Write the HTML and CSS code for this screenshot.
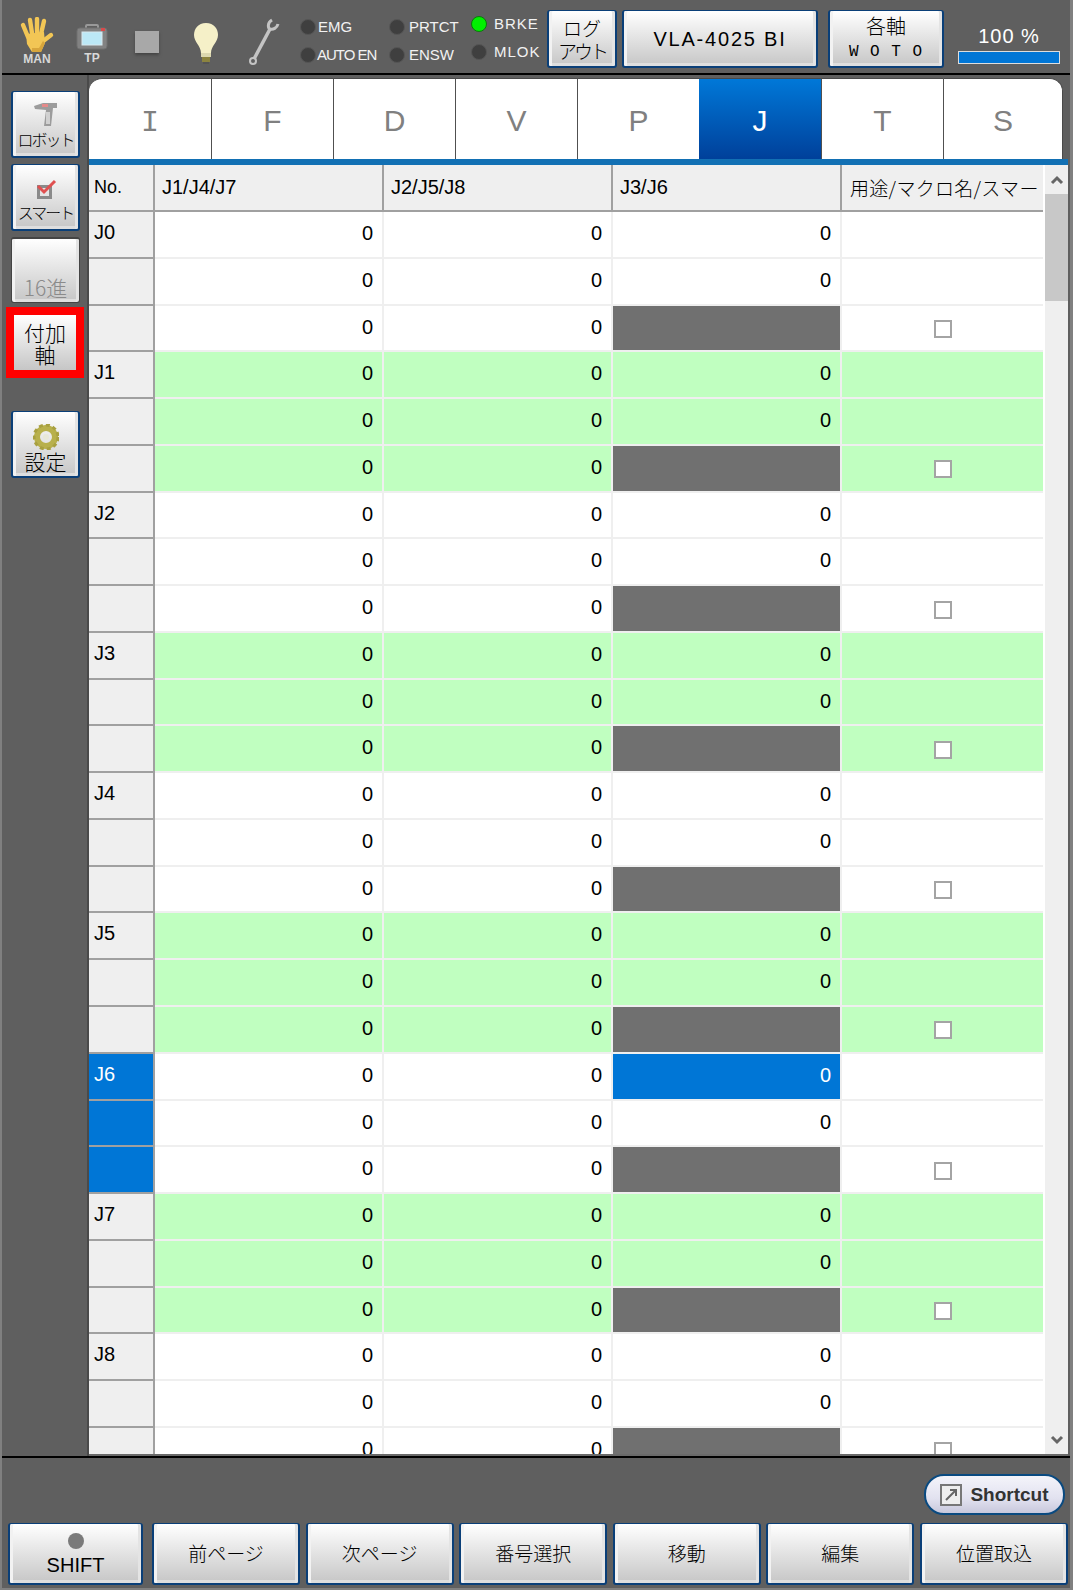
FILE: index.html
```html
<!DOCTYPE html>
<html lang="ja">
<head>
    <meta charset="UTF-8">
    <title>J</title>
    <link rel="stylesheet" href="styles.css">
</head>
<body>
<div class="screen">
    <!-- top status bar -->
    <header class="topbar">
        <div class="status-icons">
            <div class="icon-cell cell-hand">
                <svg width="36" height="36" viewBox="0 0 36 36"><g stroke="#f2c655" stroke-width="4.4" stroke-linecap="round" fill="none"><path d="M9 20 L4 8"/><path d="M13 16 L11 3"/><path d="M18 16 L18 2"/><path d="M22 17 L25 4"/><path d="M23 25 L32 18"/></g><path d="M7 17 L25 15 L26 26 L22 35 L13 35 L8 27 Z" fill="#f2c655"/><path d="M13 35 L22 35 L26 26 L24 24 L20 31 L13 31 Z" fill="#d8a63c"/></svg>
                <span class="icon-label">MAN</span>
            </div>
            <div class="icon-cell cell-tp">
                <svg width="32" height="28" viewBox="0 0 32 28"><rect x="10" y="1" width="12" height="5" rx="1" fill="none" stroke="#999" stroke-width="2"/><rect x="1" y="4" width="30" height="21" rx="3" fill="#828282" stroke="#707070"/><rect x="6" y="8" width="20" height="13" fill="#bce8f6" stroke="#d8e8ee"/><rect x="25" y="4" width="4" height="3" fill="#d84a4a"/></svg>
                <span class="icon-label">TP</span>
            </div>
            <div class="icon-cell cell-stop"><div class="stop-square"></div></div>
            <div class="icon-cell cell-bulb">
                <svg width="26" height="44" viewBox="0 0 26 44"><path d="M13 1 C5 1 1 7 1 13 C1 20 8 24 8 31 L18 31 C18 24 25 20 25 13 C25 7 21 1 13 1 Z" fill="#f5f0c8"/><rect x="8" y="31" width="10" height="4" fill="#dcd8b0"/><rect x="9" y="35" width="8" height="5" fill="#8c8440"/><rect x="10" y="40" width="6" height="2" fill="#555"/></svg>
            </div>
            <div class="icon-cell cell-wrench">
                <svg width="32" height="48" viewBox="0 0 32 48"><path d="M6 41 L22 11" fill="none" stroke="#c4c4c4" stroke-width="3.5"/><path d="M24 2 C19 5 20 10 22 11 C25 12 29 10 30 6" fill="none" stroke="#c4c4c4" stroke-width="3"/><circle cx="5" cy="43" r="3" fill="none" stroke="#c4c4c4" stroke-width="2"/></svg>
            </div>
        </div>
        <div class="lamps">
            <div class="lamp-col col-a">
                <div class="lamp"><i class="dot"></i><span>EMG</span></div>
                <div class="lamp lamp-tight"><i class="dot"></i><span>AUTO EN</span></div>
            </div>
            <div class="lamp-col col-b">
                <div class="lamp"><i class="dot"></i><span>PRTCT</span></div>
                <div class="lamp"><i class="dot"></i><span>ENSW</span></div>
            </div>
            <div class="lamp-col col-c">
                <div class="lamp"><i class="dot on"></i><span>BRKE</span></div>
                <div class="lamp"><i class="dot"></i><span>MLOK</span></div>
            </div>
        </div>
        <button class="btn btn-logout">ログ<br><span class="kana-tight">アウト</span></button>
        <button class="btn btn-model"><span class="model-name">VLA-4025 BI</span></button>
        <button class="btn btn-axis">各軸<br><span class="latin">W O T O</span></button>
        <div class="speed">
            <div class="speed-text">100 %</div>
            <div class="speed-bar"></div>
        </div>
    </header>

    <div class="middle">
        <!-- left rail -->
        <nav class="rail">
            <button class="btn rail-btn">
                <svg width="26" height="26" viewBox="0 0 26 26"><path d="M1 4 L10 1 L24 1 L24 6 L20 6 L18 24 L11 24 L13 8 L2 7 Z" fill="#9c9c9c"/><rect x="9" y="2" width="6" height="3" fill="#e48a8a"/><rect x="13" y="10" width="4" height="12" fill="#d0d0d0"/></svg>
                <span class="kana">ロボット</span>
            </button>
            <button class="btn rail-btn">
                <svg width="22" height="22" viewBox="0 0 22 22"><rect x="2" y="6" width="15" height="14" fill="#8a8a8a"/><rect x="5" y="9" width="9" height="8" fill="#e4e4e4"/><path d="M3 7 L9 13 L20 2" fill="none" stroke="#e05050" stroke-width="3"/></svg>
                <span class="kana">スマート</span>
            </button>
            <button class="btn rail-btn btn-off"><span>16進</span></button>
            <div class="red-frame">
                <button class="btn btn-extra">付加<br>軸</button>
            </div>
            <button class="btn rail-btn rail-last">
                <svg width="26" height="26" viewBox="0 0 26 26"><circle cx="13" cy="13" r="9" fill="none" stroke="#b8b04c" stroke-width="6"/><circle cx="13" cy="13" r="12" fill="none" stroke="#a8a040" stroke-width="3" stroke-dasharray="4 3"/><circle cx="13" cy="13" r="3" fill="#e8e8d8"/></svg>
                <span>設定</span>
            </button>
        </nav>

        <main class="content">
            <div class="tabs">
                <div class="tab tab-mono">I</div>
                <div class="tab">F</div>
                <div class="tab">D</div>
                <div class="tab">V</div>
                <div class="tab">P</div>
                <div class="tab tab-on">J</div>
                <div class="tab">T</div>
                <div class="tab">S</div>
            </div>
            <div class="tab-line"></div>
            <div class="table-wrap">
                <div class="grid" id="grid">
                    <div class="th th-no"><span>No.</span></div>
                    <div class="th"><span>J1/J4/J7</span></div>
                    <div class="th"><span>J2/J5/J8</span></div>
                    <div class="th"><span>J3/J6</span></div>
                    <div class="th th-last">用途/マクロ名/スマー</div>
                </div>
                <div class="scrollbar">
                    <div class="scroll-arrow">
                        <svg width="14" height="10" viewBox="0 0 14 10"><path d="M2 8 L7 3 L12 8" fill="none" stroke="#666" stroke-width="3"/></svg>
                    </div>
                    <div class="scroll-thumb"></div>
                    <div class="scroll-space"></div>
                    <div class="scroll-arrow">
                        <svg width="14" height="10" viewBox="0 0 14 10"><path d="M2 2 L7 7 L12 2" fill="none" stroke="#666" stroke-width="3"/></svg>
                    </div>
                </div>
            </div>
        </main>
    </div>

    <!-- bottom bar -->
    <footer class="bottom">
        <div class="shortcut-row">
            <button class="shortcut">
                <svg width="22" height="22" viewBox="0 0 22 22"><rect x="1" y="1" width="20" height="20" fill="#eee" stroke="#777" stroke-width="2"/><path d="M6 16 L15 7 M10 6 L16 6 L16 12" fill="none" stroke="#666" stroke-width="2"/></svg>
                <span>Shortcut</span>
            </button>
        </div>
        <div class="fn-row">
            <button class="btn fn fn-shift"><i class="shift-lamp"></i><span>SHIFT</span></button>
            <button class="btn fn">前ページ</button>
            <button class="btn fn">次ページ</button>
            <button class="btn fn">番号選択</button>
            <button class="btn fn">移動</button>
            <button class="btn fn">編集</button>
            <button class="btn fn">位置取込</button>
        </div>
    </footer>
</div>
<script>
    // 27 rows, 3 per J group
    var grid = document.getElementById('grid');
    var html = '';
    for (var i = 0; i < 27; i++) {
        var group = Math.floor(i / 3);
        var sub = i % 3;
        var rowCls = group % 2 ? ' green' : '';
        var noCls = group === 6 ? ' no-on' : '';
        html += '<div class="td no' + noCls + '">' + (sub === 0 ? 'J' + group : '') + '</div>';
        html += '<div class="td num' + rowCls + '">0</div>';
        html += '<div class="td num' + rowCls + '">0</div>';
        if (sub === 2) {
            html += '<div class="td off"></div>';
        } else if (group === 6 && sub === 0) {
            html += '<div class="td num cell-on">0</div>';
        } else {
            html += '<div class="td num' + rowCls + '">0</div>';
        }
        html += '<div class="td use' + rowCls + '">' + (sub === 2 ? '<i class="check"></i>' : '') + '</div>';
    }
    grid.insertAdjacentHTML('beforeend', html);
</script>
</body>
</html>
```

FILE: styles.css
```css
* {
    box-sizing: border-box;
}
html, body {
    margin: 0;
    height: 100%;
    overflow: hidden;
}
.screen {
    width: 1073px;
    height: 1590px;
    background: #5f5f5f;
    border-left: 2px solid #808080;
    border-right: 3px solid #808080;
    border-bottom: 2px solid #808080;
    display: flex;
    flex-direction: column;
    font-family: "Noto Sans CJK JP", sans-serif;
    font-weight: 300;
    color: #000;
    overflow: hidden;
}
.latin {
    font-family: "Liberation Mono", monospace;
    font-size: 16px;
    letter-spacing: 1px;
}

/* buttons */
.btn {
    font-family: "Noto Sans CJK JP", sans-serif;
    font-weight: 300;
    font-size: 19px;
    line-height: 19px;
    color: #000;
    padding: 0;
    border: 2px solid #0a3f78;
    border-top-width: 1px;
    border-radius: 3px;
    background: linear-gradient(#ffffff, #c6c6c6);
    box-shadow: inset 3px 0 0 #f2f2f2, inset -3px 0 0 #e4e4e4, inset 0 -3px 0 #dedede;
}

/* top bar */
.topbar {
    height: 75px;
    flex: none;
    border-bottom: 2px solid #000;
    display: flex;
    align-items: flex-start;
}
.status-icons {
    display: flex;
    width: 298px;
    height: 73px;
}
.icon-cell {
    display: flex;
    flex-direction: column;
    align-items: center;
    flex: none;
}
.icon-label {
    font-family: "Liberation Sans", sans-serif;
    font-size: 12px;
    line-height: 12px;
    font-weight: bold;
    color: #d8d8d8;
}
.cell-hand { width: 60px; padding: 17px 0 0 10px; }
.cell-tp { width: 60px; padding: 24px 0 0 0; }
.cell-stop { width: 50px; padding: 31px 0 0 0; }
.cell-bulb { width: 58px; padding: 22px 0 0 10px; }
.cell-wrench { width: 60px; padding: 18px 0 0 8px; }
.stop-square {
    width: 24px;
    height: 22px;
    background: #a8a8a8;
    box-shadow: 0 2px 3px #444;
}
.lamps {
    display: flex;
    width: 247px;
    padding-top: 18px;
}
.lamp-col {
    display: flex;
    flex-direction: column;
    gap: 11px;
}
.col-a { width: 89px; }
.col-b { width: 82px; }
.col-c { margin-top: -3px; }
.lamp {
    display: flex;
    align-items: center;
    gap: 4px;
    height: 17px;
    font-family: "Liberation Sans", sans-serif;
    font-weight: 400;
    font-size: 15px;
    color: #f2f2f2;
    white-space: nowrap;
}
.col-a .lamp {
    gap: 2px;
}
.col-a .lamp-tight {
    gap: 1px;
    letter-spacing: -1px;
}
.col-c .lamp {
    gap: 7px;
    letter-spacing: 1px;
}
.dot {
    width: 16px;
    height: 16px;
    border-radius: 50%;
    flex: none;
    background: #3f3f3f;
    border: 1px solid #555;
}
.dot.on {
    background: #00f000;
    border-color: #0a7a0a;
}
.btn-logout {
    width: 70px;
    height: 58px;
    margin: 10px 5px 0 0;
    line-height: 23px;
}
.kana-tight {
    letter-spacing: -3px;
}
.btn-model {
    width: 196px;
    height: 58px;
    margin: 10px 10px 0 0;
}
.model-name {
    font-family: "Liberation Sans", sans-serif;
    font-weight: 400;
    font-size: 20px;
    letter-spacing: 1.8px;
}
.btn-axis {
    width: 116px;
    height: 58px;
    margin-top: 10px;
    font-size: 20px;
    line-height: 22px;
}
.speed {
    margin-left: 14px;
    width: 102px;
    padding-top: 24px;
    color: #fff;
    text-align: center;
    font-family: "Liberation Sans", sans-serif;
    font-weight: 400;
    font-size: 20px;
    line-height: 24px;
    letter-spacing: 1px;
}
.speed-bar {
    height: 13px;
    margin-top: 3px;
    background: #0076d6;
    border: 1px solid #ddd;
}

/* middle */
.middle {
    height: 1381px;
    flex: none;
    display: flex;
}
.rail {
    width: 87px;
    flex: none;
    border-right: 2px solid #4a4a4a;
    padding: 16px 0 0 9px;
    display: flex;
    flex-direction: column;
}
.rail-btn {
    width: 69px;
    height: 67px;
    margin-bottom: 6px;
    display: flex;
    flex-direction: column;
    align-items: center;
    justify-content: flex-end;
    padding-bottom: 5px;
    font-size: 21px;
    line-height: 20px;
    white-space: nowrap;
}
.rail-btn svg {
    margin-bottom: 1px;
}
.kana {
    font-size: 16px;
    letter-spacing: -2px;
    margin-bottom: 2px;
}
.btn-off {
    border-color: #444;
    border-width: 2px 1px 1px 1px;
    color: #8a8a8a;
    height: 66px;
    margin-bottom: 4px;
    padding-bottom: 5px;
}
.red-frame {
    width: 78px;
    height: 71px;
    margin-left: -5px;
    border: 8px solid #ff0000;
    background: #ff0000;
}
.btn-extra {
    width: 62px;
    height: 55px;
    border: 0;
    border-radius: 0;
    box-shadow: none;
    display: block;
    font-size: 21px;
    line-height: 22px;
}
.rail-last {
    margin-top: 33px;
}
.content {
    width: 979px;
    flex: none;
}
.tabs {
    height: 84px;
    padding-top: 3px;
    display: flex;
    width: 974px;
}
.tab {
    width: 122px;
    flex: none;
    background: #fff;
    border-top: 1px solid #4a4a4a;
    border-left: 1px solid #505050;
    padding-top: 3px;
    display: flex;
    align-items: center;
    justify-content: center;
    font-family: "Liberation Sans", sans-serif;
    font-weight: 400;
    font-size: 30px;
    color: #808080;
}
.tab-mono {
    font-family: "Liberation Mono", monospace;
    padding-top: 7px;
}
.tab:first-child {
    border-left: 0;
    border-top-left-radius: 13px;
}
.tab:last-child {
    width: 120px;
    border-right: 1px solid #4a4a4a;
    border-top-right-radius: 13px;
}
.tab-on {
    background: linear-gradient(#0078d8, #00409a);
    color: #fff;
    border-left: 0;
}
.tab-line {
    height: 6px;
    background: #1270b4;
}
.table-wrap {
    display: flex;
    height: 1291px;
    background: #fff;
    border-bottom: 2px solid #6a6a6a;
    overflow: hidden;
}

/* table */
.grid {
    width: 956px;
    flex: none;
    background: #fff;
    display: grid;
    grid-template-columns: 66px 229px 229px 229px 201px;
    grid-auto-rows: 46.77px;
    grid-template-rows: 47px;
    overflow: hidden;
    align-content: start;
}
.th {
    background: #efefef;
    border-right: 2px solid #a0a0a0;
    border-bottom: 2px solid #a0a0a0;
    padding: 0 0 0 7px;
    display: flex;
    align-items: center;
    font-family: "Liberation Sans", sans-serif;
    font-weight: 400;
    font-size: 20px;
    white-space: nowrap;
    overflow: hidden;
}
.th-no {
    padding-left: 5px;
    font-size: 18px;
}
.th-last {
    border-right: 0;
    padding-left: 8px;
    font-family: "Noto Sans CJK JP", sans-serif;
    font-weight: 300;
    font-size: 19px;
    letter-spacing: 0.3px;
}
.td {
    border-right: 2px solid #efefef;
    border-bottom: 2px solid #efefef;
    font-family: "Liberation Sans", sans-serif;
    font-weight: 400;
    font-size: 20px;
}
.no {
    background: #efefef;
    border-right-color: #a0a0a0;
    border-bottom-color: #a0a0a0;
    padding: 10px 0 0 5px;
    line-height: 20px;
}
.no-on {
    background: #0076d6;
    color: #fff;
}
.num {
    text-align: right;
    padding-right: 9px;
    line-height: 43px;
}
.off {
    background: #707070;
}
.cell-on {
    background: #0076d6;
    color: #fff;
}
.green {
    background: #c0ffc0;
}
.use {
    border-right: 0;
    display: flex;
    align-items: center;
    justify-content: center;
}
.check {
    width: 18px;
    height: 18px;
    background: #fff;
    border: 2px solid #a4a4a4;
    margin-top: 2px;
}

/* scrollbar */
.scrollbar {
    width: 23px;
    flex: none;
    background: #efefef;
    display: flex;
    flex-direction: column;
}
.scroll-arrow {
    height: 29px;
    display: flex;
    align-items: center;
    justify-content: center;
    flex: none;
}
.scroll-thumb {
    height: 107px;
    background: #c8c8c8;
    flex: none;
}
.scroll-space {
    flex: 1;
}

/* bottom */
.bottom {
    flex: 1;
    border-top: 2px solid #000;
    display: flex;
    flex-direction: column;
}
.shortcut-row {
    display: flex;
    justify-content: flex-end;
    padding: 16px 5px 0 0;
    height: 65px;
}
.shortcut {
    width: 141px;
    height: 41px;
    border: 2px solid #0a4a80;
    border-radius: 20px;
    background: linear-gradient(#f4f4fa, #e2e2f0 60%, #c8c8dc);
    display: flex;
    align-items: center;
    justify-content: center;
    gap: 8px;
    padding: 0;
    font-family: "Liberation Sans", sans-serif;
    font-size: 19px;
    font-weight: bold;
    color: #333;
}
.fn-row {
    display: flex;
    gap: 5.6px;
    padding-left: 6px;
}
.fn {
    width: 148px;
    height: 62px;
    padding-bottom: 3px;
}
.fn-shift {
    width: 135px;
    margin-right: 3.4px;
    display: flex;
    flex-direction: column;
    align-items: center;
    padding: 9px 0 0;
    font-family: "Liberation Sans", sans-serif;
    font-weight: 400;
    font-size: 20px;
}
.fn-shift span {
    margin-top: 7px;
}
.shift-lamp {
    width: 16px;
    height: 16px;
    border-radius: 50%;
    background: #7a7a7a;
}
```
